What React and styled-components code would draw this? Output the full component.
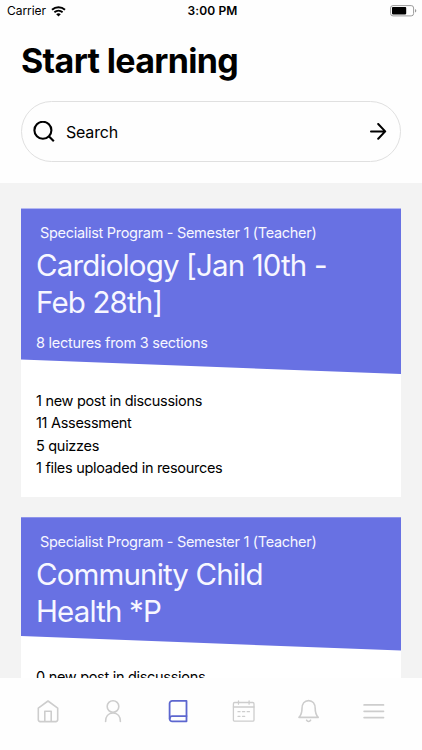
import React from "react";
import styled, { createGlobalStyle } from "styled-components";

const GlobalStyle = createGlobalStyle`
  * {
    box-sizing: border-box;
  }
  body {
    margin: 0;
    background: #fefefe;
    color: #000;
    font-family: Inter, "Liberation Sans", sans-serif;
    overflow: hidden;
  }
  h1, h2, p, ul {
    margin: 0;
    padding: 0;
  }
`;

const Screen = styled.div`
  width: 422px;
  height: 750px;
  display: flex;
  flex-direction: column;
  overflow: hidden;
  background: #fefefe;
`;

const StatusBar = styled.div`
  height: 22px;
  flex: none;
  display: grid;
  grid-template-columns: 1fr auto 1fr;
  align-items: center;
  padding: 0 5px 0 7px;
  font-size: 12px;
  line-height: 22px;
`;

const Carrier = styled.div`
  display: flex;
  align-items: center;
  gap: 5px;
  letter-spacing: -0.05px;
`;

const Clock = styled.span`
  margin-left: 1px;
  font-weight: 600;
  letter-spacing: 0.1px;
`;

const Battery = styled.div`
  display: flex;
  justify-content: flex-end;
`;

const Header = styled.header`
  height: 161px;
  flex: none;
  padding: 18px 21px 0;
`;

const Heading = styled.h1`
  font-size: 34px;
  line-height: 42px;
  font-weight: 700;
  letter-spacing: -0.65px;
`;

const SearchBar = styled.div`
  margin-top: 19px;
  height: 61px;
  display: flex;
  align-items: center;
  padding: 0 13px 0 11px;
  border: 1px solid #e0e0e0;
  border-radius: 31px;
`;

const SearchLabel = styled.span`
  flex: 1;
  margin-left: 11px;
  font-size: 16px;
  line-height: 20px;
  letter-spacing: -0.2px;
`;

const Feed = styled.main`
  flex: 1;
  min-height: 0;
  overflow: hidden;
  display: flex;
  flex-direction: column;
  gap: 20.4px;
  padding: 25.4px 21px 0;
  background: #f3f3f3;
`;

const Card = styled.article`
  flex: none;
  background: #fff;
`;

const Banner = styled.div`
  padding: 14.7px 15px 21.2px;
  background: #6871e3;
  color: #f7f7ff;
  clip-path: polygon(0 0, 100% 0, 100% 100%, 0 calc(100% - 14.5px));
`;

const Program = styled.p`
  padding-left: 4px;
  font-size: 14.5px;
  line-height: 20px;
  letter-spacing: -0.3px;
`;

const CourseTitle = styled.h2`
  margin-top: 4px;
  max-width: 310px;
  font-size: 29.5px;
  line-height: 36.8px;
  font-weight: 400;
  letter-spacing: -0.85px;
`;

const Lectures = styled.p`
  margin-top: 12.2px;
  font-size: 14.5px;
  line-height: 20px;
  letter-spacing: -0.27px;
`;

const Updates = styled.ul`
  padding: 15.7px 15px 17.4px;
  list-style: none;
  font-size: 14.5px;
  line-height: 22.4px;
  letter-spacing: -0.3px;
`;

const TabBar = styled.nav`
  height: 72px;
  flex: none;
  display: grid;
  grid-template-columns: repeat(6, 1fr);
  padding: 20px 15px 0;
  background: #fefefe;
`;

const Tab = styled.div`
  display: flex;
  justify-content: center;
  color: ${(props) => (props.$active ? "#5c66cf" : "#cdcdcd")};
`;

const TabSvg = styled.svg`
  width: 26px;
  height: 26px;
  fill: none;
  stroke: currentColor;
  stroke-linecap: round;
  stroke-linejoin: round;
`;

const WifiIcon = () => (
  <svg width="15" height="11" viewBox="0 0 15 11" fill="none" stroke="#000">
    <path d="M1 3.8C4.7.3 10.3.3 14 3.8" strokeWidth="1.9" />
    <path d="M3.4 6.3c2.4-2.1 5.8-2.1 8.2 0" strokeWidth="1.8" />
    <path d="M5.2 8.2c1.4-1.2 3.2-1.2 4.6 0L7.5 10.5z" fill="#000" stroke="none" />
  </svg>
);

const BatteryIcon = () => (
  <svg width="27" height="12" viewBox="0 0 27 12">
    <rect x="0.6" y="0.6" width="23" height="10.3" rx="2.4" fill="none" stroke="#9b9b9b" />
    <rect x="2" y="2.1" width="14.2" height="7.3" rx="0.8" />
    <path d="M25 4v3.6c1.8-.6 1.8-3 0-3.6z" fill="#9b9b9b" />
  </svg>
);

const SearchIcon = () => (
  <svg width="22" height="22" viewBox="0 0 22 22" fill="none" stroke="#000" strokeWidth="2.1">
    <circle cx="9.9" cy="9.3" r="8.5" />
    <path d="M15.8 15.2l5 5" />
  </svg>
);

const ArrowIcon = () => (
  <svg
    width="18"
    height="18"
    viewBox="0 0 18 18"
    fill="none"
    stroke="#000"
    strokeWidth="2"
    strokeLinecap="round"
    strokeLinejoin="round"
  >
    <path d="M2 8.4h14.2M9.2 1l7 7.4-7 7.4" />
  </svg>
);

const tabs = [
  {
    name: "home",
    width: 1.6,
    paths: [
      "M3.3 10.2L13 3l9.7 7.2v11.4a2 2 0 0 1-2 2H5.3a2 2 0 0 1-2-2z",
      "M9.8 23.3V13.3h6.4v10",
    ],
  },
  {
    name: "profile",
    width: 1.6,
    paths: [
      "M13 2.7a5.8 5.8 0 1 1 0 11.6a5.8 5.8 0 1 1 0-11.6z",
      "M5.6 23.4c0-4.6 2.5-8.4 7.4-8.4s7.4 3.8 7.4 8.4",
    ],
  },
  {
    name: "courses",
    width: 1.8,
    active: true,
    paths: [
      "M21.5 2.9H7.2a2.6 2.6 0 0 0-2.6 2.6v15.2a2.6 2.6 0 0 0 2.6 2.6h14.3z",
      "M4.8 20.4c0-1.6 1-2.3 2.4-2.3h14.3",
    ],
  },
  {
    name: "calendar",
    width: 1.3,
    paths: [
      "M3.7 4.5h18a1.3 1.3 0 0 1 1.3 1.3v16.1a1.3 1.3 0 0 1-1.3 1.3h-18a1.3 1.3 0 0 1-1.3-1.3V5.8a1.3 1.3 0 0 1 1.3-1.3z",
      "M2.4 9H23M7.5 2.8v3.4M18.1 2.8v3.4",
      "M7 13.7h2M11.5 13.7h2.2M16.2 13.7h2.2M7 18.3h2M11.5 18.3h2.2",
    ],
  },
  {
    name: "alerts",
    width: 1.6,
    paths: [
      "M3 19.4c2.3-2.4 3-4.8 3-8.8 0-4.7 2.5-8 6.6-8s6.6 3.3 6.6 8c0 4 .7 6.4 3 8.8z",
      "M10.6 22.2c.9 1.8 3.1 1.8 4 0",
    ],
  },
  {
    name: "menu",
    width: 1.7,
    paths: ["M3.1 6.9h19.4M3.1 13.3h19.4M3.1 19.6h19.4"],
  },
];

const courses = [
  {
    program: "Specialist Program - Semester 1 (Teacher)",
    title: "Cardiology [Jan 10th - Feb 28th]",
    lectures: "8 lectures from 3 sections",
    updates: [
      "1 new post in discussions",
      "11 Assessment",
      "5 quizzes",
      "1 files uploaded in resources",
    ],
  },
  {
    program: "Specialist Program - Semester 1 (Teacher)",
    title: "Community Child Health *P",
    updates: ["0 new post in discussions"],
  },
];

const Course = ({ course }) => (
  <Card>
    <Banner>
      <Program>{course.program}</Program>
      <CourseTitle>{course.title}</CourseTitle>
      {course.lectures && <Lectures>{course.lectures}</Lectures>}
    </Banner>
    <Updates>
      {course.updates.map((update) => (
        <li key={update}>{update}</li>
      ))}
    </Updates>
  </Card>
);

const App = () => {
  return (
    <Screen>
      <GlobalStyle />
      <StatusBar>
        <Carrier>
          <span>Carrier</span>
          <WifiIcon />
        </Carrier>
        <Clock>3:00 PM</Clock>
        <Battery>
          <BatteryIcon />
        </Battery>
      </StatusBar>
      <Header>
        <Heading>Start learning</Heading>
        <SearchBar>
          <SearchIcon />
          <SearchLabel>Search</SearchLabel>
          <ArrowIcon />
        </SearchBar>
      </Header>
      <Feed>
        {courses.map((course) => (
          <Course key={course.title} course={course} />
        ))}
      </Feed>
      <TabBar>
        {tabs.map((tab) => (
          <Tab key={tab.name} $active={tab.active}>
            <TabSvg viewBox="0 0 26 26" strokeWidth={tab.width}>
              {tab.paths.map((d) => (
                <path key={d} d={d} />
              ))}
            </TabSvg>
          </Tab>
        ))}
      </TabBar>
    </Screen>
  );
};

export default App;
